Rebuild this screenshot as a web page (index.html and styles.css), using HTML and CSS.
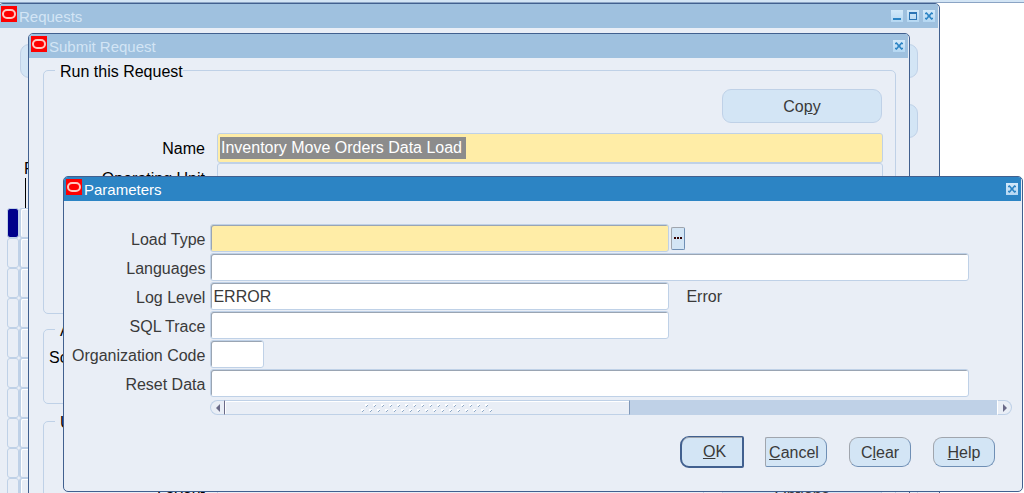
FILE: index.html
```html
<!DOCTYPE html>
<html lang="en">
<head>
<meta charset="utf-8">
<title>Requests</title>
<link rel="stylesheet" href="styles.css">
</head>
<body>
<svg class="defs" aria-hidden="true">
  <symbol id="oracle" viewBox="0 0 16 16"><rect width="16" height="16" fill="#f00"/><rect x="2" y="4" width="12" height="8" rx="4" fill="none" stroke="#ffc8c0" stroke-width="2"/></symbol>
  <symbol id="close" viewBox="0 0 12 12"><path d="M3 2.500l6 7M9 2.500l-6 7M2 3.500h2M8 3.500h2M2 8.500h2M8 8.500h2M4.500 6h3" fill="none" stroke="#2c84c4" stroke-width="1.500"/></symbol>
  <symbol id="min" viewBox="0 0 12 12"><path d="M2 8h8v2H2z" fill="#2c84c4"/></symbol>
  <symbol id="max" viewBox="0 0 12 12"><path d="M2 2h8v8H2zM3 4v5h6V4z" fill="#2c74b4" fill-rule="evenodd"/></symbol>
</svg>
<main class="desktop">
  <section class="window requests" aria-label="Requests">
    <header class="titlebar">
      <svg class="logo"><use href="#oracle"/></svg><h1 class="title">Requests</h1>
      <button class="ctl" aria-label="Minimize"><svg><use href="#min"/></svg></button>
      <button class="ctl" aria-label="Maximize"><svg><use href="#max"/></svg></button>
      <button class="ctl" aria-label="Close"><svg><use href="#close"/></svg></button>
    </header>
    <div class="requests-body">
      <div class="actions"><button class="flat" aria-label="Refresh Data"></button><button class="flat" aria-label="Submit a New Request"></button></div>
      <div class="actions actions-end"><button class="flat" aria-label="Cancel Request"></button></div>
      <div class="list-head">Request ID</div>
      <div class="list-rule"></div>
      <div class="list">
        <div class="record"><span class="mark current"></span><span class="cell"></span></div>
        <div class="record"><span class="mark"></span><span class="cell"></span></div>
        <div class="record"><span class="mark"></span><span class="cell"></span></div>
        <div class="record"><span class="mark"></span><span class="cell"></span></div>
        <div class="record"><span class="mark"></span><span class="cell"></span></div>
        <div class="record"><span class="mark"></span><span class="cell"></span></div>
        <div class="record"><span class="mark"></span><span class="cell"></span></div>
        <div class="record"><span class="mark"></span><span class="cell"></span></div>
        <div class="record"><span class="mark"></span><span class="cell"></span></div>
        <div class="record"><span class="mark"></span><span class="cell"></span></div>
      </div>
    </div>
  </section>

  <section class="window submit" aria-label="Submit Request">
    <header class="titlebar">
      <svg class="logo"><use href="#oracle"/></svg><h2 class="title">Submit Request</h2>
      <button class="ctl" aria-label="Close"><svg><use href="#close"/></svg></button>
    </header>
    <div class="submit-body">
      <fieldset class="group run">
        <legend>Run this Request</legend>
        <button class="flat copy">Co<u>p</u>y</button>
        <div class="row"><label for="name">Name</label><div class="box required"><input id="name" class="selected" value="Inventory Move Orders Data Load"></div></div>
        <div class="row"><label for="unit">Operating Unit</label><input id="unit" class="box"></div>
      </fieldset>
      <fieldset class="group times">
        <legend>At these Times</legend>
        <span>Schedule</span>
      </fieldset>
      <fieldset class="group completion">
        <legend>Upon Completion</legend>
        <div class="row"><label for="layout">Layout</label><input id="layout" class="box"><button class="flat">Options</button></div>
      </fieldset>
    </div>
  </section>

  <section class="window active parameters" aria-label="Parameters">
    <header class="titlebar">
      <svg class="logo"><use href="#oracle"/></svg><h2 class="title">Parameters</h2>
      <button class="ctl" aria-label="Close"><svg><use href="#close"/></svg></button>
    </header>
    <form class="form">
      <label for="load">Load Type</label>
      <div class="field"><input id="load" class="text medium required"><button type="button" class="lov" aria-label="List of values"><svg viewBox="0 0 8 2"><path d="M0 0h2v2H0zM3 0h2v2H3zM6 0h2v2H6z" fill="#300"/></svg></button></div>
      <label for="lang">Languages</label>
      <div class="field"><input id="lang" class="text"></div>
      <label for="log">Log Level</label>
      <div class="field"><input id="log" class="text medium" value="ERROR"><output class="meaning" for="log">Error</output></div>
      <label for="sql">SQL Trace</label>
      <div class="field"><input id="sql" class="text medium"></div>
      <label for="org">Organization Code</label>
      <div class="field"><input id="org" class="text small"></div>
      <label for="reset">Reset Data</label>
      <div class="field"><input id="reset" class="text"></div>
      <div class="scroll">
        <button type="button" class="arrow arrow-left" aria-label="Scroll left"><svg viewBox="0 0 4 8"><path d="M4 0v8L0 4z" fill="#6a6a88"/></svg></button>
        <div class="thumb"><svg class="grip"><defs><pattern id="dots" width="8" height="10" patternUnits="userSpaceOnUse"><path d="M4 0h3v1H6v1H4zM0 5h3v1H2v1H0z" fill="#fff"/><path d="M7 1v1H6v1H5V2h1V1zM3 6v1H2v1H1V7h1V6z" fill="#8fa9c6"/></pattern></defs><rect width="100%" height="100%" fill="url(#dots)"/></svg></div>
        <div class="track"></div>
        <button type="button" class="arrow arrow-right" aria-label="Scroll right"><svg viewBox="0 0 4 8"><path d="M0 0v8l4-4z" fill="#6a6a88"/></svg></button>
      </div>
      <div class="buttons">
        <button type="button" class="push default"><u>O</u>K</button>
        <button type="button" class="push cancel"><u>C</u>ancel</button>
        <button type="button" class="push">C<u>l</u>ear</button>
        <button type="button" class="push"><u>H</u>elp</button>
      </div>
    </form>
  </section>
</main>
</body>
</html>
```
FILE: styles.css
```css
* { box-sizing: border-box; }
body, input, button { font: 16px/20px "Liberation Sans", Arial, sans-serif; }
body { margin: 0; color: #000; background: #fff; }
button { padding: 0; margin: 0; border: 0; color: #3a3a3a; }
input { min-width: 0; margin: 0; padding: 0 2px; outline: 0; color: #3a3a3a; }
svg { display: block; }
.defs { display: none; }

.desktop {
  position: relative;
  height: 100vh;
  overflow: hidden;
  border-top: 2px solid #d3e5f5;
  box-shadow: inset 0 1px #8ba4c4;
}

/* Windows float freely on the desktop. */
.window {
  position: absolute;
  background: #e9eef6;
  border: 1px solid #41608f;
  border-radius: 5px;
  overflow: hidden;
}
.requests { left: -2px; right: 84px; top: 1px; bottom: -20px; }
.submit { left: 28px; right: 114px; top: 31px; bottom: -40px; }
.parameters { left: 63px; right: 1px; top: 174px; }

.titlebar {
  display: flex;
  align-items: flex-start;
  gap: 4px;
  height: 24px;
  margin-right: 1px;
  padding: 2px 3px 0 2px;
  background: #9fc1df;
  color: #d3e5f5;
}
.active .titlebar { background: #2c84c4; color: #fff; }
.logo { width: 16px; height: 16px; }
.title { flex: 1; margin: 0 0 0 -2px; font-size: 15px; font-weight: 400; line-height: 22px; }
.ctl { width: 12px; height: 12px; margin-top: 4px; background: linear-gradient(#d3e9fa, #b5d7f2); }
.ctl svg { width: 12px; height: 12px; }

.flat {
  width: 160px;
  height: 34px;
  padding-top: 2px;
  background: #d3e5f5;
  border: 1px solid #bfd1e7;
  border-radius: 9px;
}

/* Requests */
.requests-body { padding: 16px 21px 0 8px; }
.actions { display: flex; justify-content: space-between; margin: 0 0 26px 13px; }
.actions-end { justify-content: flex-end; margin-bottom: 20px; }
.list-head { padding: 1px 0 0 17px; line-height: 19px; }
.list-rule { height: 30px; margin-left: 18px; border-left: 1px solid #000; }
.record { display: flex; height: 30px; }
.mark, .cell { border: 1px solid #bfd1e7; border-radius: 3px; }
.mark { width: 12px; }
.cell { flex: 1; border-left-width: 2px; box-shadow: inset 1px 1px #fff; }
.current { background: #00008b; }

/* Submit Request */
.submit-body { padding: 1px 13px 0 14px; }
.group { min-width: 0; margin: 0; padding: 0 12px 0 5px; border: 1px solid #bfd1e7; border-radius: 5px; }
.group legend { margin-left: 6px; padding: 4px 0 0 5px; line-height: 18px; }
.run { height: 255px; padding-top: 8px; }
.times { height: 86px; margin-top: 4px; padding-top: 8px; }
.completion { height: 140px; margin-top: 6px; padding-top: 46px; }
.copy { display: block; margin: 0 1px 10px auto; }
.row { display: flex; align-items: center; gap: 12px; }
.row label { width: 156px; padding-top: 2px; text-align: right; }
.row .flat { margin: 0 1px 0 6px; }
.box { flex: 1; height: 30px; padding: 3px 2px 0; background: #e9eef6; border: 1px solid #bfd1e7; border-radius: 3px; }
.required { background: #ffeda7; }
.selected { display: block; width: 246px; height: 22px; padding: 0 1px; border: 0; background: #8c8c8c; color: #fff; }

/* Parameters */
.form {
  display: grid;
  grid-template-columns: max-content 1fr;
  gap: 1px 5px;
  padding: 23px 10px 23px 8px;
  color: #3a3a3a;
}
.form label { padding-top: 6px; text-align: right; }
.field { display: flex; align-items: center; padding-right: 43px; height: 28px; }
.text {
  flex: 1;
  height: 28px;
  padding-top: 2px;
  background: #fff;
  border: 1px solid #bfd1e7;
  border-radius: 3px;
  box-shadow: inset 1px 1px #9aa5b3;
}
.text.required { background: #ffeda7; }
.medium { flex: 0 1 459px; }
.small { flex: 0 0 54px; }
.lov {
  display: grid;
  place-items: center;
  width: 14px;
  height: 23px;
  margin-left: 2px;
  background: #d3e5f5;
  border: 1px solid;
  border-color: #a0a5ad #6f8fb5 #6f8fb5 #a0a5ad;
  border-radius: 2px;
}
.lov svg { width: 8px; height: 2px; }
.meaning { margin-left: 17px; padding-top: 2px; }

.scroll { grid-column: 2; display: flex; height: 15px; margin-top: 2px; }
.arrow { display: grid; place-items: center; width: 15px; background: #e9eef6; border: 1px solid #bfd1e7; }
.arrow svg { width: 4px; height: 8px; }
.arrow-left { border-radius: 8px 0 0 8px; border-right: 1px solid #6a6a88; }
.arrow-right { border-radius: 0 8px 8px 0; border-left: 1px solid #fff; }
.thumb {
  display: flex;
  justify-content: center;
  flex: 405;
  padding-top: 3px;
  border: solid #bfd1e7;
  border-width: 1px 0;
  border-right: 1px solid #7f97b8;
  box-shadow: inset 1px 1px #fff;
}
.grip { width: 132px; height: 8px; }
.track { flex: 368; background: #bfd1e7; }

.buttons { grid-column: 1 / -1; display: flex; align-items: center; justify-content: flex-end; gap: 22px; padding: 20px 17px 0 0; }
.push {
  width: 62px;
  height: 30px;
  padding-top: 1px;
  background: #d3e5f5;
  border: 1px solid;
  border-color: #a0a5ad #6f8fb5 #6f8fb5 #a0a5ad;
  border-radius: 9px;
}
.default {
  width: 64px;
  height: 32px;
  margin-right: -1px;
  padding-left: 5px;
  border: 2px solid #41608f;
  border-top-width: 1px;
  border-radius: 9px 2px 2px 9px;
  box-shadow: inset 0 1px #a0a5ad;
}
.cancel { padding-right: 4px; border-radius: 2px 9px 9px 2px; }
```
